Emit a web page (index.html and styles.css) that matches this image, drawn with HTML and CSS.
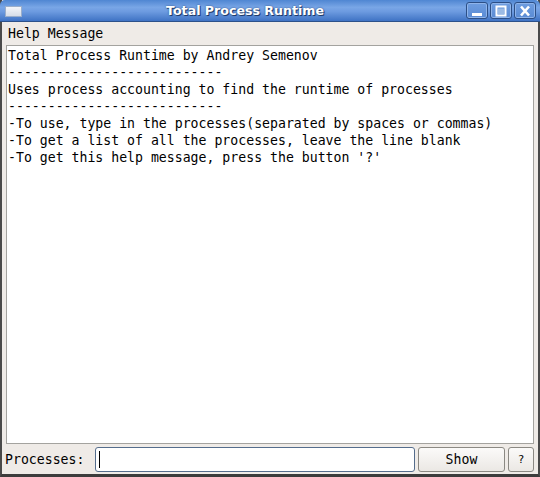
FILE: index.html
```html
<!DOCTYPE html>
<html lang="en">
<head>
    <meta charset="UTF-8">
    <title>Total Process Runtime</title>
    <link rel="stylesheet" href="styles.css">
</head>
<body>
    <div class="window">
        <div class="titlebar">
            <div class="app-icon"></div>
            <div class="title">Total Process Runtime</div>
            <div class="controls">
                <div class="ctl">
                    <svg width="14" height="12" viewBox="0 0 14 12"><rect x="2" y="8" width="10" height="3" fill="#fff"/></svg>
                </div>
                <div class="ctl">
                    <svg width="14" height="12" viewBox="0 0 14 12"><rect x="2.5" y="1.5" width="9" height="9" fill="none" stroke="#fff" stroke-width="2"/><rect x="4" y="3.5" width="6" height="5.5" fill="#9cbbe4"/></svg>
                </div>
                <div class="ctl">
                    <svg width="14" height="12" viewBox="0 0 14 12"><path d="M3 1.5 L11 10.5 M11 1.5 L3 10.5" stroke="#fff" stroke-width="2.6"/></svg>
                </div>
            </div>
        </div>

        <div class="menubar">
            <span class="menu-item">Help Message</span>
        </div>

        <div class="output">Total Process Runtime by Andrey Semenov
---------------------------
Uses process accounting to find the runtime of processes
---------------------------
-To use, type in the processes(separated by spaces or commas)
-To get a list of all the processes, leave the line blank
-To get this help message, press the button '?'</div>

        <div class="bottom">
            <span class="label">Processes:</span>
            <div class="entry"><span class="caret"></span></div>
            <button class="btn show">Show</button>
            <button class="btn help">?</button>
        </div>
    </div>
</body>
</html>
```

FILE: styles.css
```css
html, body {
    margin: 0;
    padding: 0;
}
body {
    width: 540px;
    height: 477px;
    overflow: hidden;
    font-family: "DejaVu Sans Mono", monospace;
    font-size: 13.2px;
    color: #000;
}
.window {
    height: 477px;
    box-sizing: border-box;
    display: flex;
    flex-direction: column;
    background: #efebe7;
    border-left: 2px solid #4a4a4a;
    border-right: 2px solid #4a4a4a;
    border-bottom: 3px solid #3c3c3c;
}
.titlebar {
    height: 21px;
    flex: none;
    display: flex;
    align-items: center;
    margin: 0 -2px;
    padding: 0 4px 0 5px;
    background: linear-gradient(#4f86d2 0%, #79a6e6 35%, #6d9be0 55%, #3f73c4 100%);
    border-bottom: 1px solid #2d518a;
    border-radius: 5px 5px 0 0;
}
.app-icon {
    width: 15px;
    height: 9px;
    margin-top: 2px;
    background: linear-gradient(#f4f6fa, #d6dde8);
    border: 1px solid #9aaecb;
}
.title {
    flex: 1;
    text-align: center;
    color: #fff;
    font-family: "DejaVu Sans", sans-serif;
    font-weight: bold;
    font-size: 12.6px;
    padding-left: 2px;
    text-shadow: 1px 1px 0 #1f3b6b, 0 0 2px #2a4b80;
}
.controls {
    display: flex;
    gap: 2px;
}
.ctl {
    width: 20px;
    height: 15px;
    display: flex;
    align-items: center;
    justify-content: center;
    border: 1px solid #2c4f86;
    border-radius: 3px;
    background: linear-gradient(#6e9de0, #5a8bd4);
    box-shadow: inset 0 0 0 1px #8fb4ea;
}
.menubar {
    height: 22px;
    flex: none;
    display: flex;
    align-items: center;
    padding-left: 6px;
}
.output {
    flex: 1;
    margin: 1px 4px 0 4px;
    padding: 1px 4px 0 1px;
    background: #fff;
    border: 1px solid #a4a39f;
    line-height: 17px;
    white-space: pre;
    overflow: hidden;
}
.bottom {
    height: 30px;
    flex: none;
    display: flex;
    align-items: center;
    padding: 0 1px 0 3px;
    gap: 3px;
}
.label {
    width: 87px;
}
.entry {
    width: 320px;
    height: 25px;
    box-sizing: border-box;
    background: #fff;
    border: 1px solid #556d8c;
    border-radius: 3px;
    display: flex;
    align-items: center;
    padding-left: 3px;
}
.caret {
    width: 1px;
    height: 17px;
    background: #000;
}
.btn {
    height: 25px;
    font-family: "DejaVu Sans Mono", monospace;
    font-size: 13.2px;
    color: #000;
    border: 1px solid #8b8983;
    border-radius: 3px;
    background: linear-gradient(#fbfaf9, #ebe8e4);
    padding: 0;
}
.show {
    width: 87px;
}
.help {
    width: 26px;
    font-size: 11px;
}
```
